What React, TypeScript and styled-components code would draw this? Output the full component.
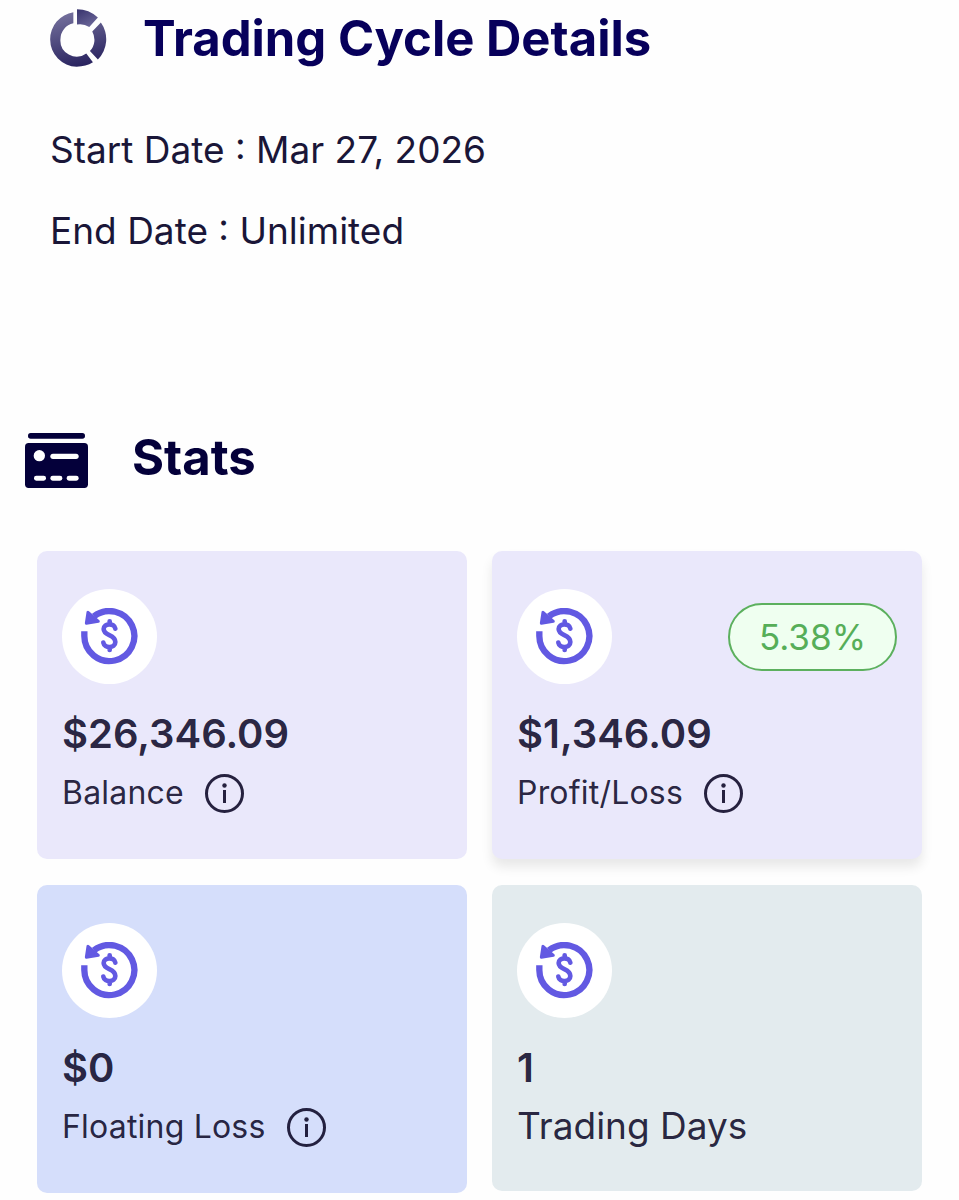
import React from "react";
import styled, { createGlobalStyle } from "styled-components";

const GlobalStyle = createGlobalStyle`
  *, *::before, *::after { box-sizing: border-box; }
  body {
    margin: 0;
    background: #fefefe;
    font-family: Inter, "Liberation Sans", sans-serif;
    color: rgba(8, 4, 35, 0.87);
  }
`;

const Page = styled.main`
  display: flex;
  flex-direction: column;
  gap: 170px;
  padding: 9px 0 7px;
`;

const CycleSection = styled.section`
  display: flex;
  flex-direction: column;
  gap: 54px;
  padding: 0 50px;
`;

const CycleHeader = styled.header`
  display: flex;
  align-items: flex-start;
  gap: 36px;
`;

const Heading = styled.h2<{ $color: string }>`
  margin: 0;
  font-size: 49px;
  line-height: 60px;
  font-weight: 700;
  color: ${(p) => p.$color};
`;

const DateList = styled.div`
  display: flex;
  flex-direction: column;
  gap: 27px;
`;

const DateLine = styled.p`
  margin: 0;
  font-size: 37px;
  line-height: 54px;
  color: #1a1638;
`;

const StatsSection = styled.section`
  display: flex;
  flex-direction: column;
  gap: 63px;
`;

const StatsHeader = styled.header`
  display: flex;
  align-items: flex-end;
  gap: 44px;
  padding: 0 25px;
`;

const CardGrid = styled.div`
  display: grid;
  grid-template-columns: repeat(2, minmax(0, 1fr));
  align-items: start;
  gap: 26px 25px;
  padding: 0 37px;
`;

const Card = styled.article<{ $tone: string; $raised?: boolean }>`
  padding: 38px 25px 37px;
  border-radius: 10px;
  background: ${(p) => p.$tone};
  box-shadow: ${(p) => (p.$raised ? "0 8px 12px rgba(0, 0, 0, 0.09)" : "none")};
`;

const CardTop = styled.div`
  display: flex;
  align-items: center;
  justify-content: space-between;
`;

const IconDisc = styled.div`
  display: flex;
  align-items: center;
  justify-content: center;
  width: 95px;
  height: 95px;
  border-radius: 50%;
  background: #fff;
`;

const Pill = styled.span`
  padding: 4px 29px;
  border: 2px solid #5cb05e;
  border-radius: 34px;
  background: #effff0;
  color: #56ae58;
  font-size: 35px;
  line-height: 56px;
`;

const Value = styled.p`
  margin: 20px 0 0;
  font-size: 40px;
  line-height: 60px;
  font-weight: 600;
`;

const LabelRow = styled.div`
  display: flex;
  align-items: center;
  gap: 21px;
  font-size: 32px;
  line-height: 58px;
  letter-spacing: 0.00625em;
`;

const PlainLabel = styled.p`
  margin: 0;
  font-size: 37px;
  line-height: 56px;
`;

const InfoButton = styled.button`
  display: flex;
  padding: 0;
  border: 0;
  background: none;
  color: inherit;
  cursor: pointer;
`;

const DonutIcon = () => (
  <svg width="57" height="58" viewBox="60 26 171 175" aria-hidden="true">
    <defs>
      <linearGradient id="donut" gradientUnits="userSpaceOnUse" x1="110" y1="30" x2="150" y2="200">
        <stop offset="0" stopColor="#77739f" />
        <stop offset="1" stopColor="#29235f" />
      </linearGradient>
      <linearGradient id="wedge" gradientUnits="userSpaceOnUse" x1="150" y1="27" x2="180" y2="80">
        <stop offset="0" stopColor="#3b3670" />
        <stop offset="1" stopColor="#6a6698" />
      </linearGradient>
    </defs>
    <path
      fill="url(#donut)"
      d="M130 36A82 82 0 0 0 60 118A82 82 0 0 0 140 200Q168 200 189 187L169 160A49 49 0 0 1 91 117A49 49 0 0 1 130 69Z"
    />
    <path fill="url(#wedge)" d="M141 27A92 92 0 0 1 204 52L178 80A54 54 0 0 0 141 73Z" />
    <path fill="url(#donut)" d="M213 67A86 86 0 0 1 204 178L180 153A50 50 0 0 0 187 94Z" />
  </svg>
);

const CardsIcon = () => (
  <svg width="63" height="55" viewBox="45 55 189 165" aria-hidden="true">
    <rect x="54" y="55" width="171" height="17" rx="8" fill="#04003a" />
    <rect x="45" y="85" width="189" height="135" rx="11" fill="#04003a" />
    <g fill="#fff">
      <circle cx="88" cy="123" r="17" />
      <rect x="121" y="117" width="85" height="16" rx="8" />
      <rect x="72" y="183" width="36" height="15" rx="7" />
      <rect x="121" y="183" width="36" height="15" rx="7" />
      <rect x="170" y="183" width="36" height="15" rx="7" />
    </g>
  </svg>
);

const RefundIcon = () => (
  <svg width="57" height="57" viewBox="-1 1 171 171" fill="none" stroke="#6259e2" aria-hidden="true">
    <path d="M9 71V85A75 75 0 1 0 38 26" strokeWidth="19" />
    <path d="M20 14L15 47L51 41Z" fill="#6259e2" strokeWidth="9" strokeLinejoin="round" />
    <path
      d="M102 63C99 45 67 46 67 64C67 86 102 79 102 103C102 122 69 123 66 105M85 41V50M85 118V127"
      strokeWidth="14"
      strokeLinecap="round"
    />
  </svg>
);

const InfoIcon = () => (
  <svg width="39" height="39" viewBox="0 0 39 39" fill="none" stroke="currentColor" aria-hidden="true">
    <circle cx="19.5" cy="19.5" r="18" strokeWidth="3" />
    <path d="M19.5 16V29" strokeWidth="3" />
    <circle cx="19.5" cy="11.5" r="2.2" fill="currentColor" stroke="none" />
  </svg>
);

interface Stat {
  value: string;
  label: string;
  tone: string;
  info?: boolean;
  badge?: string;
  raised?: boolean;
}

const stats: Stat[] = [
  { value: "$26,346.09", label: "Balance", tone: "#eae8fb", info: true },
  { value: "$1,346.09", label: "Profit/Loss", tone: "#eae8fb", info: true, badge: "5.38%", raised: true },
  { value: "$0", label: "Floating Loss", tone: "#d5defb", info: true },
  { value: "1", label: "Trading Days", tone: "#e3ebee" },
];

const StatCard = ({ value, label, tone, info, badge, raised }: Stat) => (
  <Card $tone={tone} $raised={raised}>
    <CardTop>
      <IconDisc>
        <RefundIcon />
      </IconDisc>
      {badge && <Pill>{badge}</Pill>}
    </CardTop>
    <Value>{value}</Value>
    {info ? (
      <LabelRow>
        <span>{label}</span>
        <InfoButton type="button" aria-label={`About ${label}`}>
          <InfoIcon />
        </InfoButton>
      </LabelRow>
    ) : (
      <PlainLabel>{label}</PlainLabel>
    )}
  </Card>
);

export default function App() {
  return (
    <>
      <GlobalStyle />
      <Page>
        <CycleSection>
          <CycleHeader>
            <DonutIcon />
            <Heading $color="#07005b">Trading Cycle Details</Heading>
          </CycleHeader>
          <DateList>
            <DateLine>Start Date : Mar 27, 2026</DateLine>
            <DateLine>End Date : Unlimited</DateLine>
          </DateList>
        </CycleSection>
        <StatsSection>
          <StatsHeader>
            <CardsIcon />
            <Heading $color="#04003a">Stats</Heading>
          </StatsHeader>
          <CardGrid>
            {stats.map((s) => (
              <StatCard key={s.label} {...s} />
            ))}
          </CardGrid>
        </StatsSection>
      </Page>
    </>
  );
}
